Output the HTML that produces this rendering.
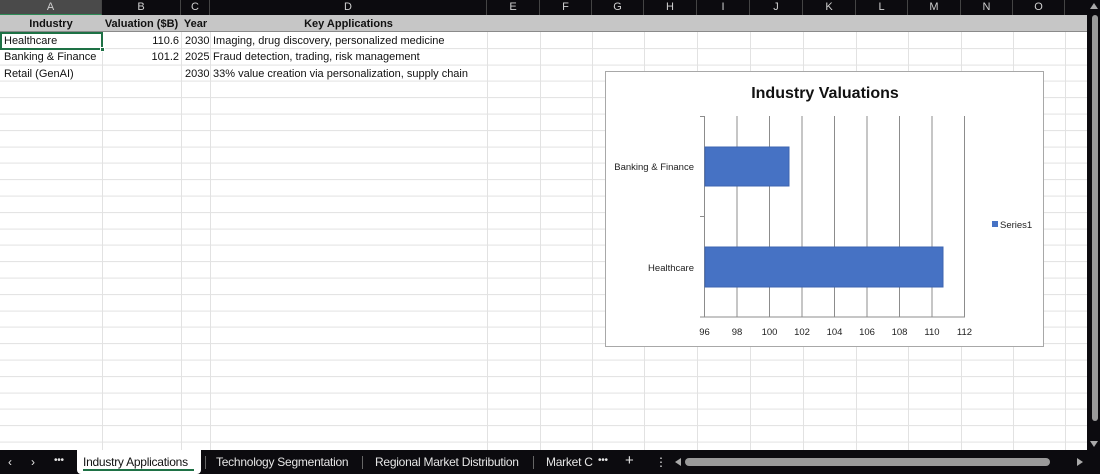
<!DOCTYPE html>
<html><head><meta charset="utf-8"><style>
*{margin:0;padding:0;box-sizing:border-box}
body{width:1100px;height:474px;background:#0c0b0f;position:relative;overflow:hidden;font-family:"Liberation Sans",sans-serif;}
.abs{position:absolute}
#hdr{left:0;top:0;width:1087px;height:15px;background:#0c0b0f}
.ch{position:absolute;top:0;height:15px;color:#cfcfcf;font-size:11px;text-align:center;line-height:15px;border-right:1px solid #444}
#sheet{left:0;top:15px;width:1087px;height:435px;background:#fff;
background-image:repeating-linear-gradient(to bottom,transparent 0,transparent 15.4px,#e2e2e2 15.4px,#e2e2e2 16.4px);
background-position:0 17.6px;}
.vl{position:absolute;top:15px;height:435px;width:1px;background:#e2e2e2}
#r1{left:0;top:15px;width:1087px;height:17px;background:#c6c6c6;border-bottom:1px solid #8a8a8a}
.t{position:absolute;font-size:11px;color:#111;white-space:nowrap;line-height:16px}
.b{font-weight:bold}
#tabs{left:0;top:450px;width:1100px;height:24px;background:#0c0b0f;color:#e6e6e6;font-size:12px}
.tab{position:absolute;top:5px;white-space:nowrap;letter-spacing:-0.25px}
#chart{left:605px;top:71px;width:439px;height:276px;background:#fff;border:1px solid #a8a8a8}
</style></head><body>
<div id="hdr" class="abs">
<div class="ch" style="left:0;width:102px;background:#4a4a4a;border-bottom:1px solid #2e8b57">A</div>
<div class="ch" style="left:102px;width:79px">B</div>
<div class="ch" style="left:181px;width:29px">C</div>
<div class="ch" style="left:210px;width:277px">D</div>
<div class="ch" style="left:487px;width:53px">E</div>
<div class="ch" style="left:540px;width:52px">F</div>
<div class="ch" style="left:592px;width:52px">G</div>
<div class="ch" style="left:644px;width:53px">H</div>
<div class="ch" style="left:697px;width:53px">I</div>
<div class="ch" style="left:750px;width:53px">J</div>
<div class="ch" style="left:803px;width:53px">K</div>
<div class="ch" style="left:856px;width:52px">L</div>
<div class="ch" style="left:908px;width:53px">M</div>
<div class="ch" style="left:961px;width:52px">N</div>
<div class="ch" style="left:1013px;width:52px">O</div>
</div>
<div id="sheet" class="abs"></div>
<div class="vl" style="left:102px"></div><div class="vl" style="left:181px"></div><div class="vl" style="left:210px"></div><div class="vl" style="left:487px"></div><div class="vl" style="left:540px"></div><div class="vl" style="left:592px"></div><div class="vl" style="left:644px"></div><div class="vl" style="left:697px"></div><div class="vl" style="left:750px"></div><div class="vl" style="left:803px"></div><div class="vl" style="left:856px"></div><div class="vl" style="left:908px"></div><div class="vl" style="left:961px"></div><div class="vl" style="left:1013px"></div><div class="vl" style="left:1065px"></div>
<div id="r1" class="abs"></div>
<div class="t b" style="left:0;width:102px;text-align:center;top:16px">Industry</div>
<div class="t b" style="left:102px;width:79px;text-align:center;top:16px">Valuation ($B)</div>
<div class="t b" style="left:181px;width:29px;text-align:center;top:16px">Year</div>
<div class="t b" style="left:210px;width:277px;text-align:center;top:16px">Key Applications</div>
<div class="abs" style="left:0;top:32px;width:103px;height:18px;border:2px solid #1e7145"></div>
<div class="abs" style="left:100px;top:47px;width:5px;height:5px;background:#1e7145;border:1px solid #fff"></div>
<div class="t" style="left:4px;top:33px">Healthcare</div>
<div class="t" style="left:102px;width:77px;text-align:right;top:33px">110.6</div>
<div class="t" style="left:185px;top:33px">2030</div>
<div class="t" style="left:213px;top:33px">Imaging, drug discovery, personalized medicine</div>
<div class="t" style="left:4px;top:49px">Banking &amp; Finance</div>
<div class="t" style="left:102px;width:77px;text-align:right;top:49px">101.2</div>
<div class="t" style="left:185px;top:49px">2025</div>
<div class="t" style="left:213px;top:49px">Fraud detection, trading, risk management</div>
<div class="t" style="left:4px;top:66px">Retail (GenAI)</div>
<div class="t" style="left:185px;top:66px">2030</div>
<div class="t" style="left:213px;top:66px">33% value creation via personalization, supply chain</div>

<div id="chart" class="abs">
<svg width="439" height="276" style="position:absolute;left:-1px;top:-1px" font-family="Liberation Sans, sans-serif">
<text x="220" y="27" text-anchor="middle" font-size="16" font-weight="bold" fill="#111">Industry Valuations</text>
<g stroke="#8c8c8c" stroke-width="1">
<line x1="99.5" y1="45" x2="99.5" y2="246"/>
<line x1="132" y1="45" x2="132" y2="246"/><line x1="164.5" y1="45" x2="164.5" y2="246"/><line x1="197" y1="45" x2="197" y2="246"/><line x1="229.5" y1="45" x2="229.5" y2="246"/><line x1="262" y1="45" x2="262" y2="246"/><line x1="294.5" y1="45" x2="294.5" y2="246"/><line x1="327" y1="45" x2="327" y2="246"/><line x1="359.5" y1="45" x2="359.5" y2="246"/>
<line x1="95" y1="246" x2="360" y2="246"/>
<line x1="95" y1="45.5" x2="100" y2="45.5"/><line x1="95" y1="145.5" x2="100" y2="145.5"/>
</g>
<rect x="100" y="76" width="84" height="39" fill="#4672c4" stroke="#3d64b0"/>
<rect x="100" y="176" width="238" height="40" fill="#4672c4" stroke="#3d64b0"/>
<g font-size="9.5" fill="#222">
<text x="89" y="99" text-anchor="end">Banking &amp; Finance</text>
<text x="89" y="200" text-anchor="end">Healthcare</text>
<g text-anchor="middle"><text x="99.5" y="264">96</text><text x="132" y="264">98</text><text x="164.5" y="264">100</text><text x="197" y="264">102</text><text x="229.5" y="264">104</text><text x="262" y="264">106</text><text x="294.5" y="264">108</text><text x="327" y="264">110</text><text x="359.5" y="264">112</text></g>
<rect x="387" y="150" width="6" height="6" fill="#4672c4"/>
<text x="395" y="157">Series1</text>
</g>
</svg>
</div>

<div class="abs" style="left:1087px;top:0;width:13px;height:450px;background:#0c0b0f"></div>
<div class="abs" style="left:1092px;top:15px;width:6px;height:406px;background:#9a9a9a;border-radius:3px"></div>
<div class="abs" style="left:1090px;top:3px;width:0;height:0;border-left:4px solid transparent;border-right:4px solid transparent;border-bottom:6px solid #aaa"></div>
<div class="abs" style="left:1090px;top:441px;width:0;height:0;border-left:4px solid transparent;border-right:4px solid transparent;border-top:6px solid #aaa"></div>

<div id="tabs" class="abs">
<div class="tab" style="left:8px">&lsaquo;</div>
<div class="tab" style="left:31px">&rsaquo;</div>
<div class="tab" style="left:54px;font-size:10px">•••</div>
<div class="abs" style="left:77px;top:0;width:124px;height:24px;background:#fff;border-radius:0 0 4px 4px"></div>
<div class="tab" style="left:83px;color:#111">Industry Applications</div>
<div class="abs" style="left:83px;top:19px;width:111px;height:2px;background:#1e7145"></div>
<div class="abs" style="left:205px;top:6px;width:1px;height:13px;background:#666"></div>
<div class="tab" style="left:216px">Technology Segmentation</div>
<div class="abs" style="left:362px;top:6px;width:1px;height:13px;background:#666"></div>
<div class="tab" style="left:375px">Regional Market Distribution</div>
<div class="abs" style="left:533px;top:6px;width:1px;height:13px;background:#666"></div>
<div class="tab" style="left:546px">Market C</div>
<div class="tab" style="left:598px;font-size:10px">•••</div>
<div class="tab" style="left:625px;font-size:15px;top:2px">+</div>
<div class="tab" style="left:655px">⋮</div>
<div class="abs" style="left:675px;top:8px;width:0;height:0;border-top:4px solid transparent;border-bottom:4px solid transparent;border-right:6px solid #aaa"></div>
<div class="abs" style="left:685px;top:8px;width:365px;height:8px;background:#9a9a9a;border-radius:4px"></div>
<div class="abs" style="left:1077px;top:8px;width:0;height:0;border-top:4px solid transparent;border-bottom:4px solid transparent;border-left:6px solid #aaa"></div>
</div>
</body></html>
